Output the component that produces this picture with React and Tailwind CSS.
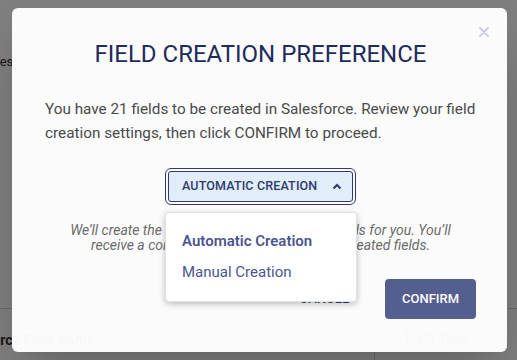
export default function App() {
  return (
    <div className="relative w-[517px] h-[360px] overflow-hidden bg-white font-['Roboto',sans-serif]">
      {/* page behind the dialog */}
      <div className="flex flex-col pt-[53px]">
        <div className="-ml-[37px] text-[13px] leading-[18px] text-[#333]">Matches</div>
        <div className="mt-[237px] flex h-[52px] border-t border-[#d4d4d4]">
          <div className="w-[375px] border-r border-[#d4d4d4] pt-[19px]">
            <span className="-ml-[24px] inline-block text-[14px] font-bold text-[#333]">Source Field Name</span>
          </div>
          <div className="flex-1 pt-[19px] pl-[30px] text-[14px] text-[#333]">Field Type</div>
        </div>
      </div>

      {/* overlay */}
      <div className="absolute inset-0 bg-black/50" />

      {/* dialog */}
      <div className="absolute left-[12px] top-[8px] w-[495px] h-[344px] rounded-[6px] bg-white/[0.97] shadow-2xl flex flex-col pl-[33px] pr-[31px] pt-[31px]">
        <button className="absolute top-[19px] right-[18px] w-[10px] h-[10px]">
          <svg width="10" height="10" viewBox="0 0 10 10">
            <path d="M1 1L9 9M9 1L1 9" stroke="#c8cde0" strokeWidth="2" strokeLinecap="round" />
          </svg>
        </button>

        <h2 className="text-center text-[24px] leading-[30px] text-[#1f2b5b]">FIELD CREATION PREFERENCE</h2>

        <p className="mt-[28px] text-[15.3px] leading-[24px] text-[#4a4a4a]">
          You have 21 fields to be created in Salesforce. Review your field creation settings, then click CONFIRM to proceed.
        </p>

        <div className="mt-[26px] flex justify-center">
          <div className="relative">
            <button className="flex w-[185px] h-[31px] items-center justify-between rounded-[3px] border border-[#2f3b6c] bg-[#e1edf8] pl-[13px] pr-[10px] outline outline-1 outline-offset-2 outline-[#2f3b6c]">
              <span className="text-[12.5px] font-medium tracking-[0.15px] text-[#2f3b6c]">AUTOMATIC CREATION</span>
              <svg width="10" height="7" viewBox="0 0 10 7">
                <path d="M1.5 5.5L5 2L8.5 5.5" fill="none" stroke="#2f3b6c" strokeWidth="2" />
              </svg>
            </button>

            <div className="absolute left-[-3px] top-[41px] z-10 w-[192px] h-[90px] rounded-[4px] border border-[#e2e2e2] bg-white py-[13px] shadow-[0_2px_6px_rgba(0,0,0,0.25)]">
              <div className="pl-[16px] text-[15px] leading-[31px] font-semibold text-[#4b5690]">Automatic Creation</div>
              <div className="pl-[16px] text-[15px] leading-[31px] text-[#4b5690]">Manual Creation</div>
            </div>
          </div>
        </div>

        <p className="mt-[21px] text-center text-[14px] leading-[15px] italic text-[#6b6b6b]">
          We’ll create the missing custom Salesforce fields for you. You’ll<br />
          receive a confirmation email listing all the created fields.
        </p>

        <div className="mt-[26px] flex justify-end gap-[20px]">
          <button className="h-[40px] px-4 text-[13px] font-medium text-[#2f3b6c]">CANCEL</button>
          <button className="h-[40px] w-[91px] rounded-[4px] bg-[#545e8f] text-[13px] font-medium text-white">CONFIRM</button>
        </div>
      </div>
    </div>
  );
}
